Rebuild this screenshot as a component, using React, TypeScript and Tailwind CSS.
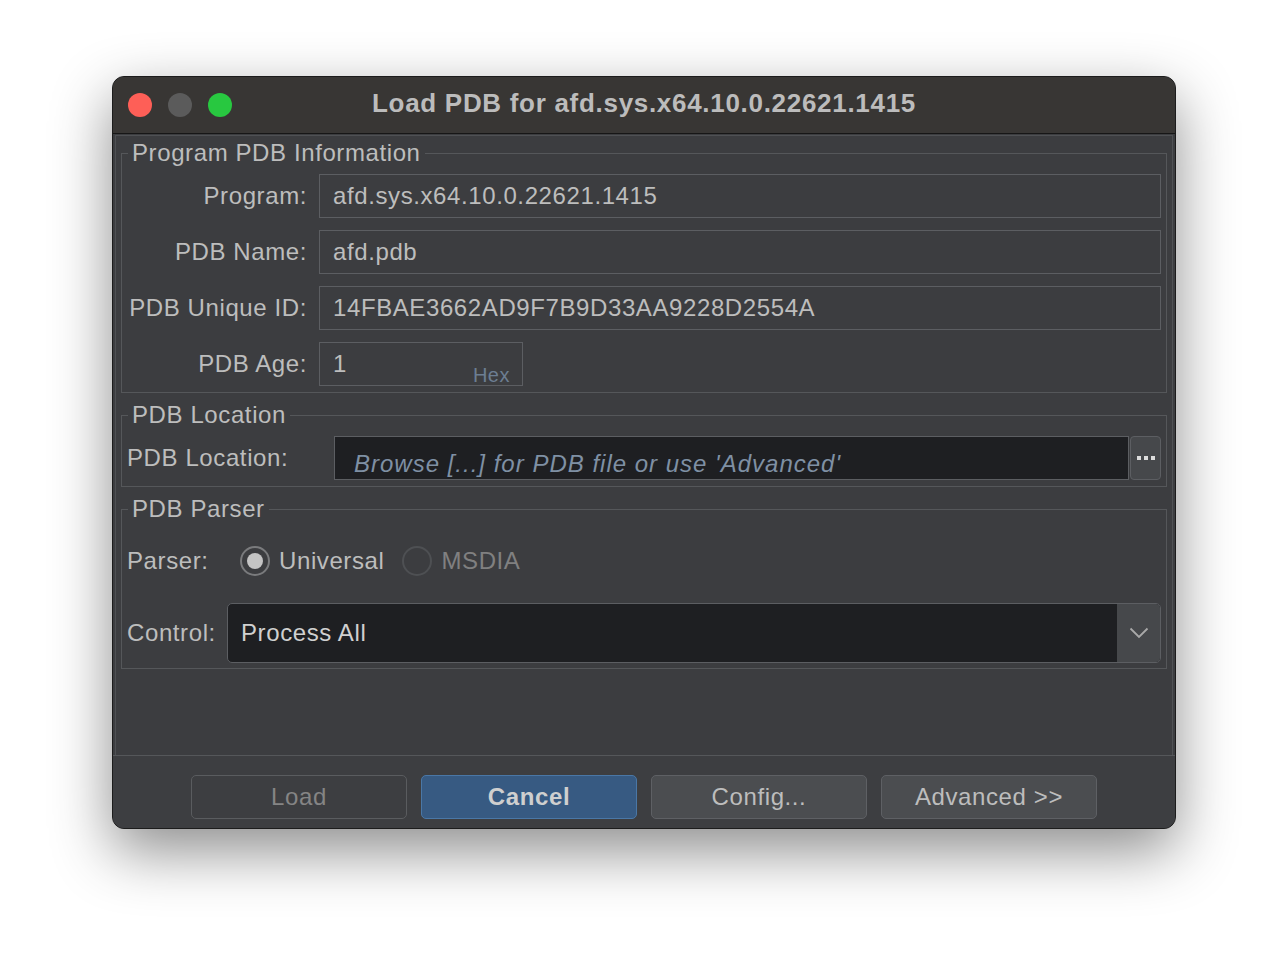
import React from "react";

// ─── Small pieces ────────────────────────────────────────────
const FONT = "font-['Liberation_Sans',Arial,sans-serif]";

function Legend({ children }: { children: React.ReactNode }) {
  return (
    <legend className="ml-[1px] px-[4px] text-[24px] leading-[28px] tracking-[0.6px] text-[#bdbdbd]">
      {children}
    </legend>
  );
}

function Row({ label, children }: { label: string; children: React.ReactNode }) {
  return (
    <div className="flex h-[44px] items-center gap-[12px]">
      <span className="w-[180px] shrink-0 text-right text-[24px] tracking-[0.6px] text-[#bdbdbd]">
        {label}
      </span>
      {children}
    </div>
  );
}

function ReadOnlyField({ value, className = "" }: { value: string; className?: string }) {
  return (
    <div
      className={`flex h-[44px] items-center border border-[#5c5e62] bg-[#3c3d40] pl-[13px] text-[24px] tracking-[0.6px] text-[#bdbdbd] ${className}`}
    >
      {value}
    </div>
  );
}

function Radio({ label, checked, disabled }: { label: string; checked?: boolean; disabled?: boolean }) {
  return (
    <div className="flex items-center gap-[9px]">
      <span
        className={`flex h-[30px] w-[30px] items-center justify-center rounded-full border-2 ${
          disabled ? "border-[#4e5053]" : "border-[#7a7b7d]"
        }`}
      >
        {checked && <span className="h-[16px] w-[16px] rounded-full bg-[#c4c4c4]" />}
      </span>
      <span className={`text-[24px] tracking-[0.6px] ${disabled ? "text-[#808080]" : "text-[#bdbdbd]"}`}>
        {label}
      </span>
    </div>
  );
}

function Button({
  children,
  variant = "normal",
}: {
  children: React.ReactNode;
  variant?: "normal" | "primary" | "disabled";
}) {
  const styles = {
    normal: "border-[#5e6064] bg-[#4b4d50] text-[#bdbdbd]",
    primary: "border-[#4a77a6] bg-[#375a82] font-bold text-[#cfcfcf]",
    disabled: "border-[#5a5c5f] bg-[#3d3e41] text-[#858585]",
  }[variant];
  return (
    <button
      className={`flex h-[44px] w-[216px] items-center justify-center rounded-[5px] border text-[24px] tracking-[0.6px] ${styles}`}
    >
      {children}
    </button>
  );
}

// ─── Dialog ──────────────────────────────────────────────────
export default function App() {
  return (
    <div className={`min-h-[978px] w-full bg-white pt-[76px] ${FONT}`}>
      <div className="mx-auto flex h-[753px] w-[1064px] flex-col overflow-hidden rounded-[12px] border border-[#1c1c1c] bg-[#3c3d40] shadow-[0_22px_60px_rgba(0,0,0,0.45)]">
        {/* Title bar */}
        <div className="grid h-[57px] shrink-0 grid-cols-[1fr_auto_1fr] items-center border-b border-[#161616] bg-[#383634]">
          <div className="flex items-center gap-[16px] pl-[15px]">
            <span className="h-[24px] w-[24px] rounded-full bg-[#fe5f57]" />
            <span className="h-[24px] w-[24px] rounded-full bg-[#5b5b5b]" />
            <span className="h-[24px] w-[24px] rounded-full bg-[#28c840]" />
          </div>
          <div className="-mt-[3px] text-[26px] font-bold tracking-[0.7px] text-[#bcbcbc]">
            Load PDB for afd.sys.x64.10.0.22621.1415
          </div>
          <div />
        </div>

        {/* Content */}
        <div className="flex flex-1 flex-col px-[2px] pt-[1px]">
          <div className="flex flex-1 flex-col border border-b-0 border-[#4f5154] px-[5px] pt-[3px]">
            {/* Program PDB Information */}
            <fieldset className="flex flex-col gap-[12px] border border-[#55575a] px-[5px] pb-[6px] pt-[7px]">
              <Legend>Program PDB Information</Legend>
              <Row label="Program:">
                <ReadOnlyField value="afd.sys.x64.10.0.22621.1415" className="flex-1" />
              </Row>
              <Row label="PDB Name:">
                <ReadOnlyField value="afd.pdb" className="flex-1" />
              </Row>
              <Row label="PDB Unique ID:">
                <ReadOnlyField value="14FBAE3662AD9F7B9D33AA9228D2554A" className="flex-1" />
              </Row>
              <Row label="PDB Age:">
                <div className="relative">
                  <ReadOnlyField value="1" className="w-[204px]" />
                  <span className="absolute bottom-[1px] right-[13px] text-[20px] leading-none tracking-[0.5px] text-[#6c7e92]">
                    Hex
                  </span>
                </div>
              </Row>
            </fieldset>

            {/* PDB Location */}
            <fieldset className="mt-[8px] flex border border-[#55575a] pb-[6px] pl-[5px] pr-[5px] pt-[7px]">
              <Legend>PDB Location</Legend>
              <div className="flex h-[44px] w-full items-center">
                <span className="w-[207px] shrink-0 text-[24px] tracking-[0.6px] text-[#bdbdbd]">
                  PDB Location:
                </span>
                <div className="flex h-[44px] flex-1 items-start border border-[#5c5e62] bg-[#1e1f22] pl-[19px] pt-[13px] text-[24px] italic leading-[28px] tracking-[1px] text-[#7f90a4]">
                  Browse [...] for PDB file or use 'Advanced'
                </div>
                <div className="ml-[1px] flex h-[44px] w-[31px] items-center justify-center rounded-[4px] border border-[#5c5e62] bg-[#46484b]">
                  <svg width="18" height="4" viewBox="0 0 18 4">
                    <rect x="0" y="0" width="4" height="4" fill="#dcdcdc" />
                    <rect x="7" y="0" width="4" height="4" fill="#dcdcdc" />
                    <rect x="14" y="0" width="4" height="4" fill="#dcdcdc" />
                  </svg>
                </div>
              </div>
            </fieldset>

            {/* PDB Parser */}
            <fieldset className="mt-[8px] flex flex-col gap-[20px] border border-[#55575a] pb-[5px] pl-[5px] pr-[5px] pt-[16px]">
              <Legend>PDB Parser</Legend>
              <div className="flex h-[44px] items-center">
                <span className="w-[113px] shrink-0 text-[24px] tracking-[0.6px] text-[#bdbdbd]">Parser:</span>
                <div className="flex items-center gap-[18px]">
                  <Radio label="Universal" checked />
                  <Radio label="MSDIA" disabled />
                </div>
              </div>
              <div className="flex h-[60px] items-center">
                <span className="w-[100px] shrink-0 text-[24px] tracking-[0.6px] text-[#bdbdbd]">Control:</span>
                <div className="flex h-[60px] flex-1 overflow-hidden rounded-[5px] border border-[#5c5e62] bg-[#1e1f22]">
                  <div className="flex flex-1 items-center pl-[13px] text-[24px] tracking-[0.6px] text-[#d0d0d0]">
                    Process All
                  </div>
                  <div className="flex w-[43px] items-center justify-center bg-[#46484b]">
                    <svg width="20" height="12" viewBox="0 0 20 12" fill="none">
                      <path d="M1.5 1.5 L10 10 L18.5 1.5" stroke="#a9a9a9" strokeWidth="1.8" />
                    </svg>
                  </div>
                </div>
              </div>
            </fieldset>
          </div>
        </div>

        {/* Footer */}
        <div className="flex h-[73px] shrink-0 justify-center gap-[14px] border-t border-[#55575a] bg-[#3d3e41] pt-[19px]">
          <Button variant="disabled">Load</Button>
          <Button variant="primary">Cancel</Button>
          <Button>Config...</Button>
          <Button>Advanced &gt;&gt;</Button>
        </div>
      </div>
    </div>
  );
}
